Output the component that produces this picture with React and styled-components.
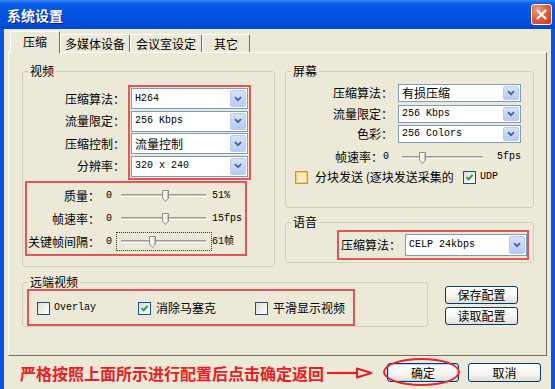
import React from 'react';
import styled, { createGlobalStyle } from 'styled-components';

const cjk = `"Noto Sans CJK SC", "Liberation Sans", sans-serif`;
const mono = `"Liberation Mono", "Noto Sans CJK SC", monospace`;

const GlobalStyle = createGlobalStyle`
  html, body {
    margin: 0;
    padding: 0;
    background: #ece9d8;
  }
  body {
    font-family: ${cjk};
    font-size: 12px;
    color: #000;
  }
`;

const Window = styled.div`
  width: 555px;
  height: 389px;
  display: flex;
  flex-direction: column;
  overflow: hidden;
  background: #ece9d8;
`;

const TitleBar = styled.div`
  height: 29px;
  flex: none;
  box-sizing: border-box;
  display: flex;
  align-items: center;
  justify-content: space-between;
  padding: 0 3px 0 7px;
  background: linear-gradient(#3a86f4 0%, #0a5ce9 12%, #0352e0 50%, #004ddb 85%, #0344c8 100%);
`;

const Title = styled.div`
  color: #fff;
  font-size: 14px;
  font-weight: bold;
  line-height: 16px;
  text-shadow: 1px 1px 0 #0a1e8c;
`;

const CloseButton = styled.div`
  width: 21px;
  height: 21px;
  box-sizing: border-box;
  border: 1px solid #fff;
  border-radius: 3px;
  background: radial-gradient(circle at 30% 25%, #f29c80 0%, #e2613b 45%, #c23a14 100%);
  display: flex;
  align-items: center;
  justify-content: center;
`;

const Frame = styled.div`
  flex: 1;
  display: flex;
  flex-direction: column;
  border-left: 4px solid #0b54e2;
  border-right: 4px solid #0b54e2;
  padding: 2px 4px 0;
`;

const TabStrip = styled.div`
  display: flex;
  align-items: flex-end;
  height: 21px;
  padding-left: 2px;
`;

const Tab = styled.div`
  position: relative;
  z-index: ${p => (p.$active ? 1 : 0)};
  width: ${p => p.$w}px;
  height: ${p => (p.$active ? 22 : 18)}px;
  margin-bottom: ${p => (p.$active ? -1 : 0)}px;
  padding-bottom: ${p => (p.$active ? 2 : 0)}px;
  box-sizing: border-box;
  border: 1px solid;
  border-color: #fff #716f64 transparent #fff;
  border-bottom: none;
  border-radius: 2px 2px 0 0;
  background: #ece9d8;
  display: flex;
  align-items: center;
  justify-content: center;
  line-height: 14px;
`;

const Panel = styled.div`
  height: 304px;
  box-sizing: border-box;
  border: 1px solid;
  border-color: #fff #716f64 #716f64 #fff;
  padding: 11px 12px 0 13px;
  display: flex;
  flex-direction: column;
  gap: 8px;
`;

const TopRow = styled.div`
  display: flex;
  align-items: flex-start;
  gap: 10px;
`;

const RightColumn = styled.div`
  display: flex;
  flex-direction: column;
  gap: 7px;
`;

const BottomRow = styled.div`
  display: flex;
  align-items: flex-start;
`;

const Group = styled.fieldset`
  margin: 0;
  min-width: 0;
  width: ${p => p.$w}px;
  box-sizing: border-box;
  border: 1px solid #d0d0bf;
  border-radius: 3px;
  padding: ${p => p.$pad};
`;

const Legend = styled.legend`
  margin-left: ${p => p.$indent}px;
  padding: 0 2px;
  font-size: 12px;
  line-height: 14px;
`;

const RedFrame = styled.div`
  box-sizing: border-box;
  border: 2px solid #e25656;
  padding: ${p => p.$pad || '0'};
  margin: ${p => p.$margin || '0'};
  width: ${p => (p.$w ? `${p.$w}px` : 'auto')};
  height: ${p => (p.$h ? `${p.$h}px` : 'auto')};
  display: flex;
  flex-direction: ${p => (p.$row ? 'row' : 'column')};
  align-items: ${p => (p.$row ? 'center' : 'stretch')};
  gap: ${p => p.$gap || 0}px;
`;

const FieldRow = styled.div`
  display: flex;
  align-items: flex-start;
`;

const LabelColumn = styled.div`
  width: ${p => p.$w}px;
  display: flex;
  flex-direction: column;
  gap: ${p => p.$gap}px;
  padding-top: 3px;
`;

const FieldLabel = styled.div`
  height: ${p => p.$h}px;
  width: ${p => (p.$w ? `${p.$w}px` : 'auto')};
  flex: none;
  display: flex;
  align-items: center;
  justify-content: flex-end;
  white-space: nowrap;
  line-height: 14px;
`;

const SelectRow = styled.div`
  display: flex;
  align-items: center;
  gap: ${p => p.$gap}px;
`;

const CheckRow = styled.div`
  display: flex;
  align-items: center;
  height: 18px;
  margin-top: 1px;
`;

const SelectStack = styled.div`
  display: flex;
  flex-direction: column;
  gap: ${p => p.$gap}px;
`;

const SelectBox = styled.div`
  width: ${p => p.$w}px;
  height: ${p => p.$h}px;
  flex: none;
  box-sizing: border-box;
  border: 1px solid #7f9db9;
  background: #fff;
  padding: 1px;
  display: flex;
  align-items: stretch;
`;

const SelectValue = styled.span`
  flex: 1;
  display: flex;
  align-items: center;
  padding-left: 2px;
  white-space: nowrap;
  font-family: ${p => (p.$mono ? mono : cjk)};
  font-size: ${p => (p.$mono ? 10 : 12)}px;
  line-height: 14px;
`;

const DropButton = styled.span`
  width: 16px;
  flex: none;
  box-sizing: border-box;
  border: 1px solid #b9cbf3;
  border-radius: 2px;
  background: linear-gradient(#d6e1fc, #b7cbf6);
  display: flex;
  align-items: center;
  justify-content: center;
`;

const SliderRow = styled.div`
  height: ${p => p.$h}px;
  display: flex;
  align-items: center;
  padding-left: ${p => p.$indent || 0}px;
  margin-top: ${p => p.$mt || 0}px;
`;

const Num = styled.span`
  font-family: ${mono};
  font-size: 10px;
  line-height: 14px;
  margin-left: ${p => p.$ml || 0}px;
  width: ${p => (p.$w ? `${p.$w}px` : 'auto')};
  white-space: nowrap;
`;

const SliderBox = styled.div`
  position: relative;
  width: ${p => p.$w}px;
  height: 17px;
  box-sizing: border-box;
  padding: 0 ${p => p.$r}px 0 ${p => p.$l}px;
  margin-left: ${p => p.$ml || 0}px;
  display: flex;
  align-items: center;
  outline: ${p => (p.$focus ? '1px dotted #333' : 'none')};
`;

const Track = styled.div`
  flex: 1;
  height: 1px;
  border-top: 1px solid #9d9c99;
  border-bottom: 1px solid #fff;
  background: #c9c6ba;
`;

const Thumb = styled.svg`
  position: absolute;
  top: 3px;
`;

const CheckItem = styled.label`
  display: flex;
  align-items: center;
  gap: ${p => p.$gap || 5}px;
  width: ${p => (p.$w ? `${p.$w}px` : 'auto')};
  flex: none;
`;

const CheckBox = styled.span`
  width: 13px;
  height: 13px;
  flex: none;
  box-sizing: border-box;
  border: 1px solid ${p => (p.$hot ? '#c89a3a' : '#1c5180')};
  background: ${p => (p.$hot ? 'linear-gradient(135deg, #fbe3a6, #fff6dc)' : 'linear-gradient(135deg, #dcdcd7, #fff)')};
  box-shadow: ${p => (p.$hot ? 'inset 0 0 0 1px #f8c96a' : 'none')};
  display: flex;
  align-items: center;
  justify-content: center;
`;

const CheckText = styled.span`
  font-family: ${p => (p.$mono ? mono : cjk)};
  font-size: ${p => (p.$mono ? 10 : 12)}px;
  line-height: 14px;
  white-space: nowrap;
`;

const ButtonColumn = styled.div`
  display: flex;
  flex-direction: column;
  gap: 3px;
  margin: 11px 0 0 17px;
`;

const PushButton = styled.div`
  position: relative;
  width: ${p => p.$w}px;
  height: ${p => p.$h}px;
  box-sizing: border-box;
  border: 1px solid #003c74;
  border-radius: 3px;
  background: linear-gradient(#fff 0%, #f5f5f1 55%, #e2ded3 100%);
  box-shadow: ${p => (p.$default ? 'inset 0 0 0 1px #b9d1f6' : 'none')};
  display: flex;
  align-items: center;
  justify-content: center;
  line-height: 14px;
  margin-left: ${p => p.$ml || 0}px;

  &::after {
    content: '';
    display: ${p => (p.$circled ? 'block' : 'none')};
    position: absolute;
    left: -5px;
    right: -2px;
    top: -6px;
    bottom: -5px;
    border: 2px solid #e0262c;
    border-radius: 50%;
  }
`;

const Footer = styled.div`
  flex: 1;
  display: flex;
  align-items: center;
  padding-left: 12px;
`;

const Notice = styled.span`
  color: #ec1c24;
  font-size: 16px;
  font-weight: bold;
  line-height: 18px;
  white-space: nowrap;
`;

const Arrow = styled.svg`
  margin-left: 3px;
  flex: none;
`;

const Chevron = () => (
  <svg width="8" height="6" viewBox="0 0 8 6">
    <path d="M1 1.2 L4 4.2 L7 1.2" fill="none" stroke="#4d6185" strokeWidth="1.8" />
  </svg>
);

const Tick = () => (
  <svg width="9" height="9" viewBox="0 0 9 9">
    <path d="M1.5 4.2 L3.6 6.4 L7.6 1.8" fill="none" stroke="#21a121" strokeWidth="1.9" />
  </svg>
);

function Select({ value, w, h, mono: isMono }) {
  return (
    <SelectBox $w={w} $h={h}>
      <SelectValue $mono={isMono}>{value}</SelectValue>
      <DropButton>
        <Chevron />
      </DropButton>
    </SelectBox>
  );
}

function Slider({ pos, w, l, r, ml, focus }) {
  return (
    <SliderBox $w={w} $l={l} $r={r} $ml={ml} $focus={focus}>
      <Track />
      <Thumb width="7" height="12" viewBox="0 0 7 12" style={{ left: pos - 3 }}>
        <path d="M0.5 0.5 H6.5 V8 L3.5 11.5 L0.5 8 Z" fill="#f4f3ee" stroke="#8f8d85" />
        <path d="M5.5 1.5 V8" stroke="#c2c0b6" />
      </Thumb>
    </SliderBox>
  );
}

function Check({ label, checked, hot, w, isMono, gap }) {
  return (
    <CheckItem $w={w} $gap={gap}>
      <CheckBox $hot={hot}>{checked && <Tick />}</CheckBox>
      <CheckText $mono={isMono}>{label}</CheckText>
    </CheckItem>
  );
}

const tabs = [
  { name: '压缩', w: 50, active: true },
  { name: '多媒体设备', w: 70 },
  { name: '会议室设定', w: 72 },
  { name: '其它', w: 48 },
];

const videoSelects = [
  { label: '压缩算法：', value: 'H264', mono: true },
  { label: '流量限定：', value: '256 Kbps', mono: true },
  { label: '压缩控制：', value: '流量控制' },
  { label: '分辨率：', value: '320 x 240', mono: true },
];

const videoSliders = [
  { label: '质量：', pos: 48, value: '51%' },
  { label: '帧速率：', pos: 48, value: '15fps' },
  { label: '关键帧间隔：', pos: 35, value: '61帧', focus: true },
];

const screenSelects = [
  { label: '压缩算法：', value: '有损压缩' },
  { label: '流量限定：', value: '256 Kbps', mono: true },
  { label: '色彩：', value: '256 Colors', mono: true },
];

export default function App() {
  return (
    <>
      <GlobalStyle />
      <Window>
        <TitleBar>
          <Title>系统设置</Title>
          <CloseButton>
            <svg width="11" height="11" viewBox="0 0 11 11">
              <path d="M1.5 1.5 L9.5 9.5 M9.5 1.5 L1.5 9.5" stroke="#fff" strokeWidth="2.2" strokeLinecap="round" />
            </svg>
          </CloseButton>
        </TitleBar>
        <Frame>
          <TabStrip>
            {tabs.map(t => (
              <Tab key={t.name} $w={t.w} $active={t.active}>{t.name}</Tab>
            ))}
          </TabStrip>
          <Panel>
            <TopRow>
              <Group $w={253} $pad="7px 0 10px 2px">
                <Legend $indent={3}>视频</Legend>
                <FieldRow>
                  <LabelColumn $w={100} $gap={1.5}>
                    {videoSelects.map(s => (
                      <FieldLabel key={s.label} $h={21}>{s.label}</FieldLabel>
                    ))}
                  </LabelColumn>
                  <RedFrame $pad="1px" $margin="0 0 0 3px">
                    <SelectStack $gap={1.5}>
                      {videoSelects.map(s => (
                        <Select key={s.label} value={s.value} w={117} h={21} mono={s.mono} />
                      ))}
                    </SelectStack>
                  </RedFrame>
                </FieldRow>
                <RedFrame $w={222} $pad="1px 0" $margin="1.5px 0 0 0">
                  {videoSliders.map(s => (
                    <SliderRow key={s.label} $h={23}>
                      <FieldLabel $h={23} $w={73}>{s.label}</FieldLabel>
                      <Num $ml={6} $w={11}>0</Num>
                      <Slider pos={s.pos} w={94} l={4} r={5} focus={s.focus} />
                      <Num $ml={1}>{s.value}</Num>
                    </SliderRow>
                  ))}
                </RedFrame>
              </Group>
              <RightColumn>
                <Group $w={249} $pad="6px 0 21px 9px">
                  <Legend $indent={-4}>屏幕</Legend>
                  <SelectStack $gap={2.5}>
                    {screenSelects.map(s => (
                      <SelectRow key={s.label} $gap={5}>
                        <FieldLabel $h={18} $w={98}>{s.label}</FieldLabel>
                        <Select value={s.value} w={123} h={18} mono={s.mono} />
                      </SelectRow>
                    ))}
                  </SelectStack>
                  <SliderRow $h={20} $indent={40} $mt={4}>
                    <FieldLabel $h={20}>帧速率：</FieldLabel>
                    <Num>0</Num>
                    <Slider pos={24} w={91} l={4} r={6} ml={9} />
                    <Num $ml={8}>5fps</Num>
                  </SliderRow>
                  <CheckRow>
                    <Check label="分块发送 (逐块发送采集的" hot w={168} gap={7} />
                    <Check label="UDP" checked isMono gap={4} />
                  </CheckRow>
                </Group>
                <Group $w={249} $pad="1px 4px 2px 0">
                  <Legend $indent={5}>语音</Legend>
                  <RedFrame $row $w={192} $h={30} $pad="2px 0 2px 2px" $margin="0 0 0 auto" $gap={4}>
                    <FieldLabel $h={22} $w={60}>压缩算法：</FieldLabel>
                    <Select value="CELP 24kbps" w={122} h={22} mono />
                  </RedFrame>
                </Group>
              </RightColumn>
            </TopRow>
            <BottomRow>
              <Group $w={406} $pad="0 0 0 4px">
                <Legend $indent={1}>远端视频</Legend>
                <RedFrame $row $w={328} $h={37} $pad="1px 0 0 8px">
                  <Check label="Overlay" isMono w={101} gap={4} />
                  <Check label="消除马塞克" checked w={117} />
                  <Check label="平滑显示视频" />
                </RedFrame>
              </Group>
              <ButtonColumn>
                <PushButton $w={73} $h={18}>保存配置</PushButton>
                <PushButton $w={73} $h={18}>读取配置</PushButton>
              </ButtonColumn>
            </BottomRow>
          </Panel>
          <Footer>
            <Notice>严格按照上面所示进行配置后点击确定返回</Notice>
            <Arrow width="46" height="12" viewBox="0 0 46 12">
              <path d="M0 6 H30" stroke="#ec1c24" strokeWidth="2.2" />
              <path d="M30 1.5 L44.5 6 L30 10.5 Z" fill="none" stroke="#ec1c24" strokeWidth="2" strokeLinejoin="round" />
            </Arrow>
            <PushButton $w={72} $h={19} $ml={14} $default $circled>确定</PushButton>
            <PushButton $w={73} $h={19} $ml={9}>取消</PushButton>
          </Footer>
        </Frame>
      </Window>
    </>
  );
}
